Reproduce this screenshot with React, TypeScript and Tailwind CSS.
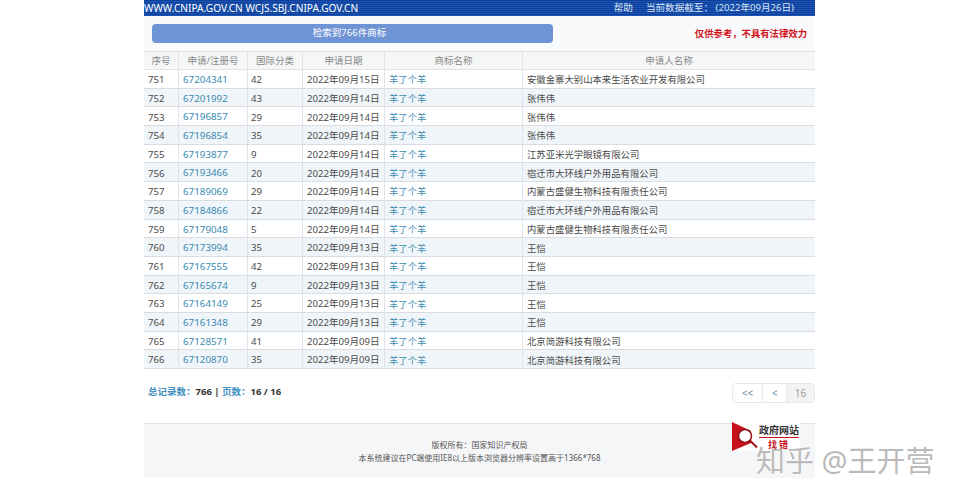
const rows = [
  ['751', '67204341', '42', '2022年09月15日', '安徽金寨大别山本来生活农业开发有限公司'],
  ['752', '67201992', '43', '2022年09月14日', '张伟伟'],
  ['753', '67196857', '29', '2022年09月14日', '张伟伟'],
  ['754', '67196854', '35', '2022年09月14日', '张伟伟'],
  ['755', '67193877', '9', '2022年09月14日', '江苏亚米光学眼镜有限公司'],
  ['756', '67193466', '20', '2022年09月14日', '宿迁市大环线户外用品有限公司'],
  ['757', '67189069', '29', '2022年09月14日', '内蒙古盛健生物科技有限责任公司'],
  ['758', '67184866', '22', '2022年09月14日', '宿迁市大环线户外用品有限公司'],
  ['759', '67179048', '5', '2022年09月14日', '内蒙古盛健生物科技有限责任公司'],
  ['760', '67173994', '35', '2022年09月13日', '王恺'],
  ['761', '67167555', '42', '2022年09月13日', '王恺'],
  ['762', '67165674', '9', '2022年09月13日', '王恺'],
  ['763', '67164149', '25', '2022年09月13日', '王恺'],
  ['764', '67161348', '29', '2022年09月13日', '王恺'],
  ['765', '67128571', '41', '2022年09月09日', '北京简游科技有限公司'],
  ['766', '67120870', '35', '2022年09月09日', '北京简游科技有限公司'],
];

const headers = ['序号', '申请/注册号', '国际分类', '申请日期', '商标名称', '申请人名称'];
const cols = 'grid grid-cols-[35px_69px_55px_82px_138px_1fr]';

export default function App() {
  return (
    <div
      className="relative h-[500px] w-[959px] overflow-hidden bg-white text-[9.6px] text-[#4a4a4a]"
      style={{ fontFamily: '"Noto Sans", "Open Sans", "Noto Sans CJK SC", sans-serif' }}
    >
      <div className="mx-auto w-[671px]">
        {/* Top bar */}
        <div className="flex h-4 items-center justify-between bg-[repeating-linear-gradient(180deg,#0e3f99_0px,#0e3f99_1px,#1c55b5_1px,#1c55b5_2px)] pr-[21px] text-white">
          <span className="text-[10.15px] leading-none">WWW.CNIPA.GOV.CN WCJS.SBJ.CNIPA.GOV.CN</span>
          <div className="flex gap-[13px] text-[9.6px] leading-none text-[#dbe6f7]">
            <span>帮助</span>
            <span>当前数据截至： (2022年09月26日)</span>
          </div>
        </div>

        {/* Result banner */}
        <div className="flex h-[35px] items-center justify-between bg-[#f8fafc] pl-2 pr-2">
          <div className="flex h-[19px] w-[401px] items-center justify-center rounded-sm bg-[#6f94d6] pr-[6px] text-[9.5px] text-white">
            检索到766件商标
          </div>
          <span className="pt-px text-[9.35px] font-bold text-[#d0121b]">仅供参考，不具有法律效力</span>
        </div>

        {/* Table */}
        <div>
          <div className={`${cols} h-[19px] border-y border-[#e0e3e7] bg-[#f5f6f6] text-[9.5px] text-[#8a8a8a]`}>
            {headers.map((h) => (
              <div key={h} className="flex items-center justify-center border-r border-[#e0e3e7] pt-[2px] last:border-r-0">
                {h}
              </div>
            ))}
          </div>
          {rows.map((r, i) => (
            <div
              key={r[0]}
              className={`${cols} h-[18.69px] border-b border-[#d9dde2] ${i % 2 === 0 ? 'bg-white' : 'bg-[#f0f5f9]'}`}
            >
              <div className="flex items-center border-r border-[#e0e3e7] pl-[4px] pt-[3px]">{r[0]}</div>
              <div className="flex items-center border-r border-[#e0e3e7] pl-[4px] pt-[3px] text-[9.8px] text-[#3a8bb0]">{r[1]}</div>
              <div className="flex items-center border-r border-[#e0e3e7] pl-[3px] pt-[3px]">{r[2]}</div>
              <div className="flex items-center border-r border-[#e0e3e7] pl-[4px] pt-[3px]">{r[3]}</div>
              <div className="flex items-center border-r border-[#e0e3e7] pl-[4px] pt-[3px] text-[9.35px] text-[#3a8bb0]">羊了个羊</div>
              <div className="flex items-center pl-[4px] pt-[3px] text-[9.37px]">{r[4]}</div>
            </div>
          ))}
        </div>

        {/* Summary and pager */}
        <div className="flex h-[54px] items-start justify-between pt-[13px]">
          <div className="pl-1 pt-px text-[9.5px] font-bold leading-[18px] text-[#333]">
            <span className="text-[#3f8fc0]">总记录数：</span>766 | <span className="text-[#3f8fc0]">页数：</span>16 / 16
          </div>
          <div className="mt-px flex h-[20px] overflow-hidden rounded-sm border border-[#e6e8eb] text-[10px]">
            <div className="flex w-[30px] items-center justify-center border-r border-[#e6e8eb] text-[#5f8fa8]">&lt;&lt;</div>
            <div className="flex w-[24px] items-center justify-center border-r border-[#e6e8eb] text-[#5f8fa8]">&lt;</div>
            <div className="flex w-[27px] items-center justify-center bg-[#f2f3f4] text-[#9a9a9a]">16</div>
          </div>
        </div>

        {/* Footer */}
        <div className="flex h-[55px] flex-col items-center justify-center gap-[2px] border-t border-[#dfe1e4] bg-[#f5f6f8] text-[8px] leading-[11px] text-[#555]">
          <span>版权所有：国家知识产权局</span>
          <span>本系统建议在PC端使用IE8以上版本浏览器分辨率设置高于1366*768</span>
        </div>
      </div>

      {/* Government site badge */}
      <div className="absolute left-[732px] top-[422px] flex h-[29px] w-[68px] bg-white">
        <svg width="26" height="29" viewBox="0 0 26 29" className="shrink-0">
          <path d="M0 0 L19 9 L19 21 L0 29 Z" fill="#c5121c" />
          <circle cx="13" cy="14" r="6.5" fill="#fff" stroke="#8f1218" strokeWidth="1.5" />
          <path d="M18 18.5 L25 25.5" stroke="#a01018" strokeWidth="2" />
        </svg>
        <div className="flex flex-1 flex-col items-center leading-none">
          <span className="border-b border-[#c5121c] pb-[2px] pt-[3px] text-[10px] font-bold text-[#333]">政府网站</span>
          <span className="pt-[2px] text-[9px] font-bold tracking-[2px] text-[#c5121c]">找错</span>
        </div>
      </div>

      {/* Watermark */}
      <div className="absolute left-[756px] top-[442px] whitespace-nowrap text-[29px] leading-[38px] text-[#bbbbbb] [text-shadow:0_1px_1px_rgba(255,255,255,0.7)]">
        知乎 @王开营
      </div>
    </div>
  );
}
